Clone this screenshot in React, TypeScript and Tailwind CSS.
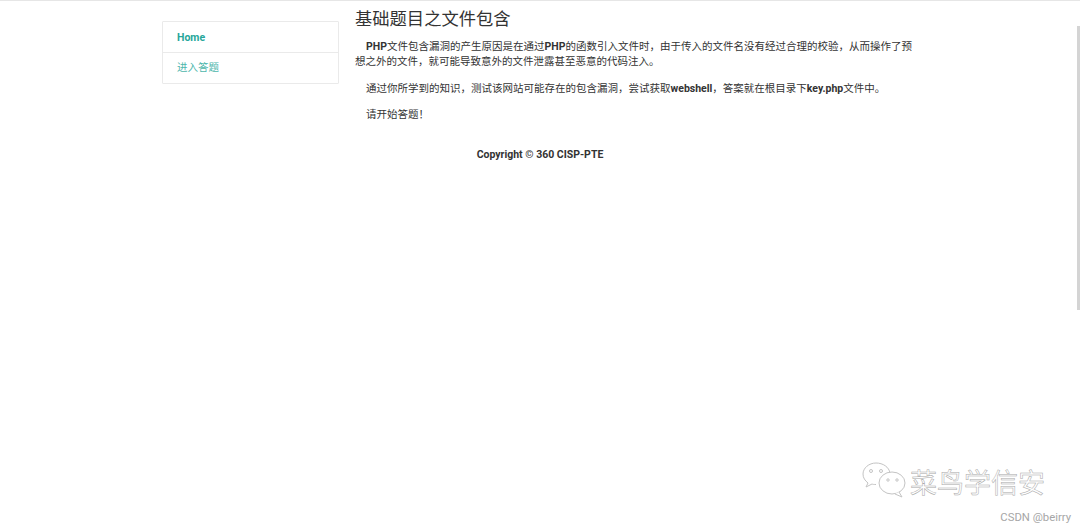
const FONT = "font-['Roboto','Noto_Sans_CJK_SC',sans-serif]";

function Watermark() {
  return (
    <div className="absolute left-[862px] top-[462px] flex items-center gap-[2px]">
      <svg width="46" height="38" viewBox="0 0 46 38" fill="none" stroke="#c4c4c4" strokeWidth="1">
        <path d="M14 1C7 1 1 6 1 12c0 4 2 6.500 5 9l-2 4 6-3c1 .5 2 .5 4 .5" fill="#fff" />
        <path d="M14 1c7 0 13 4 14 10" />
        <ellipse cx="30" cy="21" rx="13" ry="11" fill="#fff" />
        <path d="M37 30l3 5-7-3" fill="#fff" />
        <circle cx="9" cy="9" r="1.500" />
        <circle cx="19" cy="9" r="1.500" />
        <circle cx="26" cy="18" r="1.200" />
        <circle cx="35" cy="18" r="1.200" />
      </svg>
      <span className="text-[27px] leading-none text-white [-webkit-text-stroke:0.5px_#a8a8a8] font-['Noto_Sans_CJK_SC',sans-serif]">
        菜鸟学信安
      </span>
    </div>
  );
}

export default function App() {
  return (
    <div className={`relative h-[530px] w-[1080px] overflow-hidden bg-white text-[10.5px] leading-[15px] text-[#333] ${FONT}`}>
      <div className="h-px bg-[#e6e6e6]" />

      <div className="flex pl-[162px]">
        <ul className="mt-5 h-[63px] w-[177px] rounded-[1px] border border-[#eaeaea]">
          <li className="flex h-[31px] items-center border-b border-[#eaeaea] pl-[14px] font-bold text-[#26a69a]">Home</li>
          <li className="flex h-[29px] items-center pl-[14px] text-[#4db6ac]">进入答题</li>
        </ul>

        <div className="ml-4 w-[565px]">
          <h1 className="mt-[8px] text-[17.3px] leading-[21px] font-normal text-[#333]">基础题目之文件包含</h1>
          <p className="mt-[9px] indent-[11px]">
            <b>PHP</b>文件包含漏洞的产生原因是在通过<b>PHP</b>的函数引入文件时，由于传入的文件名没有经过合理的校验，从而操作了预想之外的文件，就可能导致意外的文件泄露甚至恶意的代码注入。
          </p>
          <p className="mt-[12px] indent-[11px]">
            通过你所学到的知识，测试该网站可能存在的包含漏洞，尝试获取<b>webshell</b>，答案就在根目录下<b>key.php</b>文件中。
          </p>
          <p className="mt-[11px] indent-[11px]">请开始答题！</p>
        </div>
      </div>

      <p className="mt-[25px] text-center font-bold">Copyright © 360 CISP-PTE</p>

      <div className="absolute right-0 top-[26px] h-[284px] w-[3px] bg-[#d4d4d4]" />
      <Watermark />
      <span className="absolute right-[9px] top-[511px] text-[11.3px] leading-[14px] text-[#a6a6a6]">CSDN @beirry</span>
    </div>
  );
}
